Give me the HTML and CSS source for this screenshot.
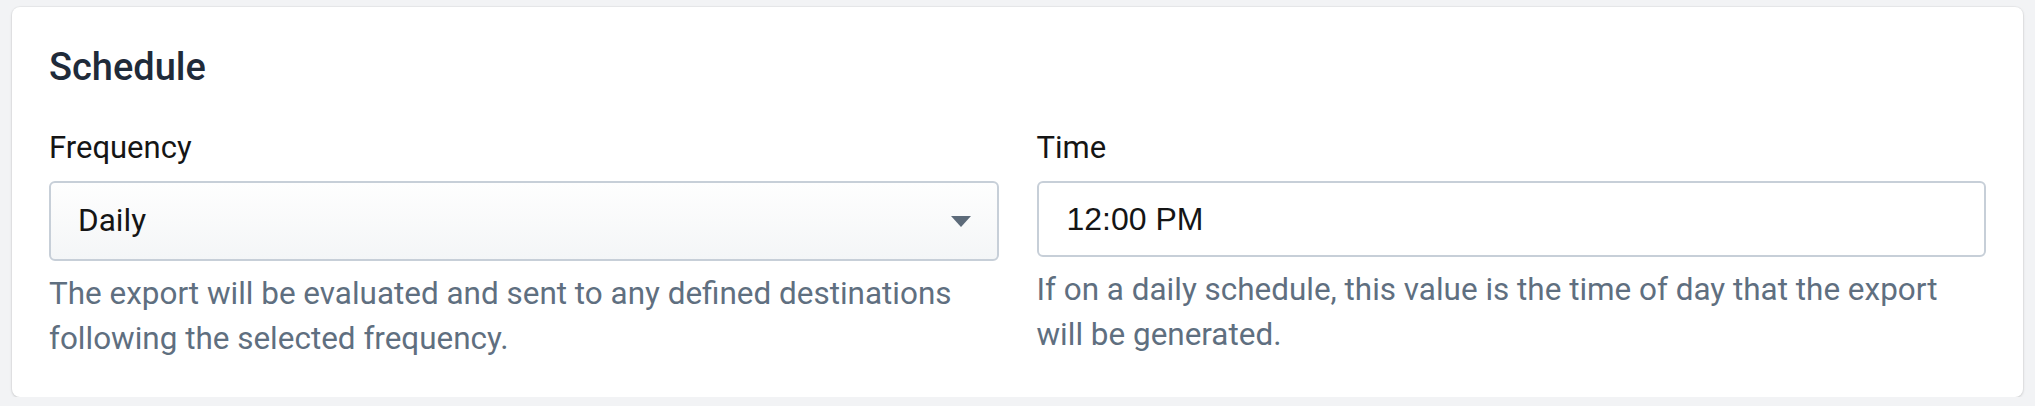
FILE: index.html
```html
<!DOCTYPE html>
<html lang="en">
<head>
  <meta charset="UTF-8">
  <title>Schedule</title>
  <link rel="stylesheet" href="styles.css">
</head>
<body>

<div class="card">
  <h2 class="card-title">Schedule</h2>

  <div class="fields">
    <!-- frequency -->
    <div class="field">
      <label class="field-label" for="frequency">Frequency</label>
      <div class="select-wrap">
        <select id="frequency" class="select">
          <option>Daily</option>
          <option>Weekly</option>
          <option>Monthly</option>
        </select>
        <svg class="select-arrow" width="20" height="11" viewBox="0 0 20 11">
          <path d="M0 0h20L10 11z" fill="#5d6b7a"/>
        </svg>
      </div>
      <p class="help">The export will be evaluated and sent to any defined destinations following the selected frequency.</p>
    </div>

    <!-- time -->
    <div class="field">
      <label class="field-label" for="time">Time</label>
      <input id="time" class="input" type="text" value="12:00 PM">
      <p class="help">If on a daily schedule, this value is the time of day that the export will be generated.</p>
    </div>
  </div>
</div>

</body>
</html>
```

FILE: styles.css
```css
* {
  margin: 0;
  padding: 0;
  box-sizing: border-box;
}

body {
  background-color: #f2f3f5;
  padding: 7px 12px 0;
  font-family: Roboto, "Liberation Sans", sans-serif;
}

.card {
  background-color: #fff;
  border-radius: 8px;
  box-shadow: 0 1px 3px rgba(0, 0, 0, .14), 0 0 0 1px rgba(0, 0, 0, .03);
  padding: 38px 37px 36px;
}

.card-title {
  font-size: 38px;
  line-height: 44px;
  font-weight: 500;
  color: #1f2b3a;
  margin-bottom: 39px;
}

.fields {
  display: grid;
  grid-template-columns: 1fr 1fr;
  gap: 38px;
}

.field-label {
  display: block;
  font-size: 31px;
  line-height: 40px;
  color: #151515;
  margin-bottom: 13px;
}

.select-wrap {
  position: relative;
}

.select {
  display: block;
  width: 100%;
  height: 80px;
  appearance: none;
  -webkit-appearance: none;
  border: 2px solid #c7cfd8;
  border-radius: 6px;
  background: linear-gradient(#fefefe, #f4f6f7);
  padding: 18px 60px 18px 27px;
  font: 31.5px/40px Roboto, "Liberation Sans", sans-serif;
  color: #151515;
  outline: none;
}

.select-arrow {
  position: absolute;
  right: 28px;
  top: 50%;
  margin-top: -5px;
  pointer-events: none;
}

.input {
  display: block;
  width: 100%;
  height: 76px;
  border: 2px solid #c7cfd8;
  border-radius: 6px;
  background-color: #fff;
  padding: 0 28px;
  font: 32px "Liberation Sans", Arial, sans-serif;
  color: #151515;
  outline: none;
}

.help {
  margin-top: 10px;
  font-size: 31.45px;
  line-height: 45px;
  color: #5f6f80;
}
```
